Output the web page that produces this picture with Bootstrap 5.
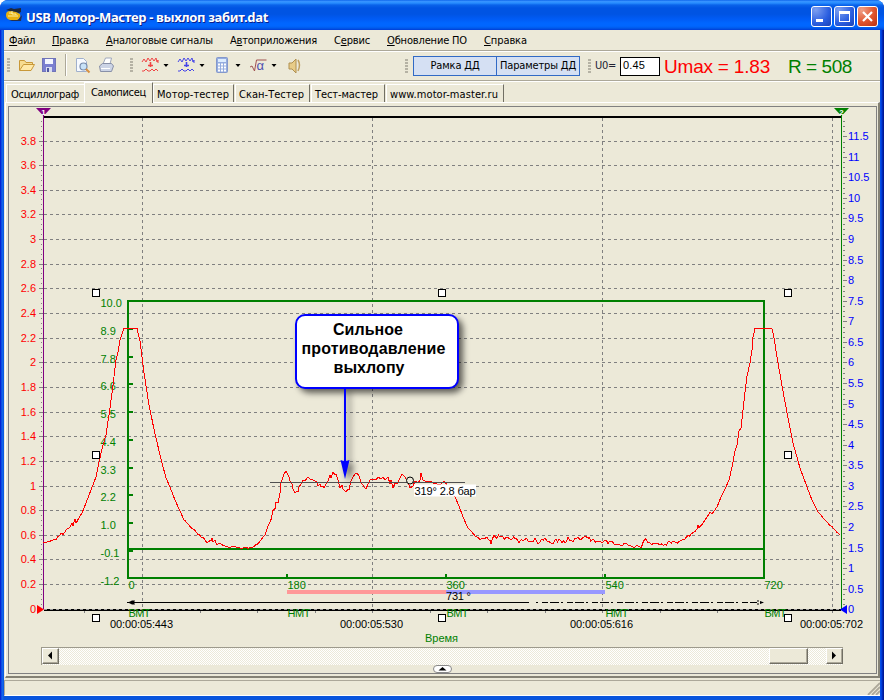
<!DOCTYPE html>
<html lang="ru">
<head>
<meta charset="utf-8">
<title>USB Мотор-Мастер</title>
<link href="https://cdn.jsdelivr.net/npm/bootstrap@5.3.0/dist/css/bootstrap.min.css" rel="stylesheet">
<style>
body{width:884px;height:700px;overflow:hidden;background:#fff;color:#000;font:11px/14px "DejaVu Sans Condensed","DejaVu Sans",sans-serif}
.win{width:884px;height:700px;background:linear-gradient(90deg,#0019cf,#0831d9 1px,#166aee 2px,#0855dd 4px,#0855dd 880px,#0048f1 881px,#001ea0 883px,#00138c);border-radius:8px 8px 0 0;overflow:hidden;padding:0 4px 4px;position:relative}
.titlebar{height:30px;margin:0 -4px;padding:3px 6px 0 6px;background:linear-gradient(#0058e6 0,#3a93ff 1px,#288eff 3px,#0a63ea 5px,#0054e3 8px,#0054e3 14px,#005bf5 19px,#0066ff 23px,#0066ff 26px,#005bec 28px,#003dd7 30px)}
.caption-text{font:bold 13px/20px "Noto Sans",sans-serif;color:#fff;text-shadow:1px 1px #0a1f8c;margin-left:4px}
.wbtn{width:21px;height:21px;border:1px solid #fff;border-radius:3px;background:radial-gradient(circle at 20% 15%,#7d9ff0,#2a5ee0 60%,#1941b5)}
.wbtn.x{background:radial-gradient(circle at 20% 15%,#f0a088,#e0552e 55%,#b83010)}
.face{background:#ece9d8}
.menubar{height:20px;padding-left:5px}
.menubar>div{padding-top:4px;height:20px}
.rule{height:2px;background:#aca899;border-bottom:1px solid #fff}
.tools{height:28px}
.grip{width:3px;height:15px;background:repeating-linear-gradient(#b5b2a4 0 2px,#ece9d8 2px 3px)}
.tgl{height:20px;width:84px;border:1px solid #316ac5;background:#d5e0f3;margin-right:-1px;padding-top:2px}
.u0{width:40px;height:19px;border:1px solid #000;background:#fff;padding:0 2px;font:11px/14px "Liberation Sans",sans-serif}
.big{font:19px/20px "Liberation Sans",sans-serif;padding-top:1px}
.tabstrip{height:20px;padding:0 0 0 2px;position:relative;z-index:2}
.tb{height:18px;border-left:1px solid #fff;border-top:1px solid #fff;border-right:1px solid #716f64;padding:3px 0 0 3px;margin-right:1px}
.tb:first-child{padding-left:4px}
.tb.on{height:21px;margin:-2px 0 -1px -2px;padding:3px 0 0 6px;background:#ece9d8}
.page{height:576px;margin-left:1px;border:1px solid #fff;border-right:2px solid #858274;border-bottom:2px solid #858274;padding:3px 2px 2px 2px}
.frame{border:1px solid #808080;height:568px;width:869px}
.plot{display:block}
.plot text{font-family:"Liberation Sans",sans-serif;font-size:11px}
.sbar{height:18px;width:802px;margin-left:32px;border-top:1px solid #9d9a8c;border-left:1px solid #9d9a8c;background:repeating-conic-gradient(#fff 0 25%,#ece9d8 0 50%) 0 0/2px 2px}
.k{height:16px;width:17px;border:1px solid #fff;border-right-color:#716f64;border-bottom-color:#716f64;box-shadow:inset -1px -1px #aca899}
.thumb{width:39px}
.status{height:16px;border:1px solid #aca899;border-right:0;border-bottom:1px solid #fff;margin-top:2px}
</style>
</head>
<body>
<div class="win d-flex flex-column">
  <div class="titlebar d-flex align-items-start">
    <svg width="16" height="18" class="mt-1"><path d="M0 3l5-2 3 1 7-1v4l-2 1z" fill="#202838"/><path d="M0 8q0-4 4-4l6 1 4 2q1 4-3 6H4Q0 12 0 8z" fill="#e8b010"/><path d="M3 6h3v1h4v1M2 9h10M6 4v3" stroke="#fff0a0" fill="none"/><path d="M3 13h9l4-5-1 6H6z" fill="#253050"/></svg>
    <div class="caption-text mt-1" data-w="242">USB Мотор-Мастер - выхлоп забит.dat</div>
    <div class="d-flex ms-auto" style="gap:2px;padding-top:3px">
      <div class="wbtn"><svg width="19" height="19" class="d-block"><path d="M4 12h7v3H4z" fill="#fff"/></svg></div>
      <div class="wbtn"><svg width="19" height="19" class="d-block"><path d="M4 4h11v11H4zM5 7v7h9V7z" fill="#fff" fill-rule="evenodd"/></svg></div>
      <div class="wbtn x"><svg width="19" height="19" class="d-block"><path d="M5 5l9 9M14 5l-9 9" stroke="#fff" stroke-width="2.2"/></svg></div>
    </div>
  </div>
  <div class="face">
    <div class="menubar d-flex" id="menu"></div>
    <div class="rule"></div>
    <div class="tools d-flex align-items-center">
      <svg width="300" height="28" viewBox="4 52 300 28" shape-rendering="auto">
        <path d="M8.5 58v15M131.500 58v15" stroke="#b5b2a4" stroke-width="3" stroke-dasharray="2 1"/>
        <path d="M65.500 54v22" stroke="#aca899"/><path d="M66.500 54v22" stroke="#fff"/>
        <path d="M19.500 70V60.500h5l1.500 2h6.500v3" fill="#f7dc90" stroke="#c89838"/><path d="M19.500 70.500l4-6h11l-3.500 6z" fill="#ffe9a8" stroke="#c89838"/>
        <rect x="42.500" y="58.500" width="13" height="13" fill="#7b7fd0" stroke="#7074b8"/><rect x="45" y="59" width="8" height="5" fill="#f4f6ff"/><rect x="46" y="67" width="6" height="5" fill="#d8dcf0"/><rect x="47" y="68" width="2" height="4" fill="#5058a0"/>
        <path d="M76.500 58.500h7l3 3v10h-10z" fill="#f7faff" stroke="#a0b0cc"/><circle cx="83.500" cy="66.500" r="3.500" fill="#c8e2f8" stroke="#788cac" stroke-width="1.200"/><path d="M86 69l3.500 3.500" stroke="#d89040" stroke-width="2"/>
        <path d="M103 64l2.500-6h6l-1.500 6" fill="#fff" stroke="#a0a8bc"/><path d="M99.500 66l3-2.500h9l2 2.500-2 5.500h-11z" fill="#ccd4e6" stroke="#8890a8"/><path d="M101 68.500h9" stroke="#fff"/>
        <g fill="none" stroke="#f04444"><path d="M142 62l2-3 2 3 2-4 2 3 2-3 2 3 2-3 1 4 1-2v3"/><path d="M142 71h2l2-2 2 2h2l2-2 2 2 2-2 2 2"/><path d="M150.500 62v5M148 65.500h5" stroke-width="1.600"/></g>
        <g fill="none" stroke="#4444e8"><path d="M178 62l2-3 2 3 2-4 2 3 2-3 2 3 2-3 1 4 1-2v3"/><path d="M178 71h2l2-2 2 2h2l2-2 2 2 2-2 2 2"/><path d="M186.500 62v5M184 65.500h5" stroke-width="1.600"/></g>
        <path d="M163.500 64h5l-2.500 3zM199.500 64h5l-2.500 3zM235.500 64h5l-2.500 3zM271.500 64h5l-2.500 3z"/>
        <rect x="216.500" y="57.500" width="11" height="15" rx="1" fill="#94acdf" stroke="#8498cc"/><rect x="218" y="59" width="8" height="3" fill="#dcecff"/><path d="M218 64.500h8M218 67.500h8M218 70.500h8" stroke="#fff" stroke-width="2" stroke-dasharray="2 1"/>
        <path d="M250 67l2-1 2.500 5 2-11h10" fill="none" stroke="#a05050"/><text x="256.500" y="70" font-family="Liberation Sans,sans-serif" font-size="13" fill="#5050b0">α</text>
        <path d="M289 63h3l4-4v14l-4-4h-3z" fill="#e8cc88" stroke="#b09050"/><path d="M298 60q3 5 0 11" fill="none" stroke="#c0a060" stroke-width="1.500"/>
      </svg>
      <div class="grip" style="margin-left:101px"></div>
      <div class="tgl text-center" style="margin-left:5px"><span data-w="49">Рамка ДД</span></div>
      <div class="tgl text-center"><span data-w="76">Параметры ДД</span></div>
      <div class="grip" style="margin-left:9px"></div>
      <div style="margin-left:4px;width:25px;color:#223"><span data-w="21">U0=</span></div>
      <div class="u0"><span data-w="22">0.45</span></div>
      <div class="big" style="margin-left:4px;width:124px;color:#f00"><span data-w="106">Umax = 1.83</span></div>
      <div class="big" style="color:#008000"><span data-w="64">R = 508</span></div>
    </div>
    <div class="rule"></div>
    <div style="height:2px"></div>
    <div class="tabstrip d-flex" id="tabs"></div>
  </div>
  <div class="face" style="margin-top:-2px">
    <div class="page"><div class="frame">
      <svg class="plot" width="867" height="540" viewBox="9 107 867 540" id="plot"></svg>
      <div class="sbar d-flex">
        <div class="k face"><svg width="14" height="13" class="d-block"><path d="M5 6.500l4-4v8z"/></svg></div>
        <div class="k thumb face" style="margin-left:710px"></div>
        <div class="k face ms-auto"><svg width="14" height="13" class="d-block"><path d="M9 6.500l-4-4v8z"/></svg></div>
      </div>
      <svg width="19" height="8" class="d-block" style="margin-left:424px"><rect x=".5" y=".5" width="18" height="7" rx="3.500" fill="#fff" stroke="#888"/><path d="M5.500 5.500l4-3.500 4 3.500z"/></svg>
    </div></div>
    <div class="status d-flex justify-content-end"><svg width="13" height="14" class="d-block"><path d="M1 14L13 2M5 14l8-8M9 14l4-4" stroke="#aca899" stroke-width="1.800"/></svg></div>
  </div>
</div>
<script src="https://cdn.jsdelivr.net/npm/bootstrap@5.3.0/dist/js/bootstrap.bundle.min.js"></script>
<script>
// Menu: label, slot width, text width
document.getElementById('menu').innerHTML = [
 ['<u>Ф</u>айл',43,26],['<u>П</u>равка',54,37],['<u>А</u>налоговые сигналы',124,107],['А<u>в</u>топриложения',104,87],
 ['С<u>е</u>рвис',53,36],['<u>О</u>бновление ПО',97,80],['<u>С</u>правка',60,43]
].map(m=>`<div style="width:${m[1]}px"><span data-w="${m[2]}">${m[0]}</span></div>`).join('');
document.getElementById('tabs').innerHTML = [
 ['Осциллограф',79,68],['Самописец',69,55,1],['Мотор-тестер',81,72],['Скан-Тестер',75,65],['Тест-мастер',74,63],['www.motor-master.ru',118,108]
].map(m=>`<div class="tb ${m[3]?'on':''}" style="width:${m[1]}px"><span data-w="${m[2]}">${m[0]}</span></div>`).join('');

let s='';
const line=(x1,y1,x2,y2,c,w=1,d='')=>s+=`<line x1="${x1}" y1="${y1}" x2="${x2}" y2="${y2}" stroke="${c}" stroke-width="${w}" stroke-dasharray="${d}" shape-rendering="crispEdges"/>`;
const text=(x,y,t,c,a='start',w=0,e='')=>s+=`<text x="${x}" y="${y}" fill="${c}" text-anchor="${a}" ${w?`textLength="${w}"`:''} ${e}>${t}</text>`;
const G='#008000';
// Grid
for(let i=1;i<=19;i++){const y=Math.floor(609.2-i*24.64)+.5;line(44,y,841,y,'#808080',1,'3 3');}
[142.5,372.5,602.5,832.5].forEach(x=>line(x,118,x,613,'#808080',1,'3 3'));
[84.5,200.5,257.5,315.5,430.5,487.5,545.5,660.5,717.5,775.5].forEach(x=>line(x,610,x,613,'#808080'));
line(44,117,841,117,'#000',2);
line(44,610,841,610,'#000',2);line(44,609.5,841,609.5,'#999',1,'3 3');
// Left scale
for(let i=0;i<=19;i++){const y=Math.floor(609.2-i*24.64)+.5;line(39,y,43,y,'#808080');text(36,y+3.5,+(i*.2).toFixed(1),'#f00','end');
 for(let k=1;k<5;k++)line(41,Math.floor(y-k*4.93)+.5,42,Math.floor(y-k*4.93)+.5,'#808080');}
line(43.5,113,43.5,609,'#800080');
// Right scale
for(let i=0;i<=23;i++){const y=Math.floor(609.8-i*20.57)+.5;line(843,y,847,y,'#808080');text(848,y+3.5,i*.5,'#00f');
 for(let k=1;k<4;k++)line(843,Math.floor(y-k*5.14)+.5,845,Math.floor(y-k*5.14)+.5,'#808080');}
line(841.5,113,841.5,609,G);
s+=`<path d="M36 108h15l-7.500 8z" fill="#800080"/><path d="M834 108h15l-7.500 8z" fill="${G}"/><path d="M37 605l7 4.500-7 4.500z" fill="#f00"/><path d="M847 605l-7 4.500 7 4.500z" fill="#00f"/>`;
text(43.5,114.5,'1','#fff','middle',0,'style="font-size:8px;font-weight:bold"');text(841.5,114.5,'2','#fff','middle',0,'style="font-size:8px;font-weight:bold"');
// Pressure frame
s+=`<path d="M128 301H764V578H128ZM128 549H764" fill="none" stroke="${G}" stroke-width="2" shape-rendering="crispEdges"/>`;
['10.0','8.9','7.8','6.6','5.5','4.4','3.3','2.2','1.0','-0.1','-1.2'].forEach((t,i)=>{const y=Math.round(301+i*27.75);text(100.5,y+5.5,t,G);if(i&&i<10)line(128,y,133,y,G,2);});
[287,446,605].forEach(x=>line(x,574,x,578,G,2));
[[128,'0'],[287,'180'],[446,'360'],[605,'540'],[764,'720']].forEach((p,i)=>{text(p[0]+.5,588.5,p[1],G);text(p[0]+.5,617,i%2?'НМТ':'ВМТ',G,'start',i%2?23:22);});
s+='<path d="M287 590h159v4H287z" fill="#ff9898"/><path d="M446 590h159v4H446z" fill="#9898ff"/>';
line(127,602.5,529,602.5,'#000');line(536,602.5,757,602.5,'#000',1,'2 4 6 2 9 2');
s+='<path d="M128 602.500l4-2h3l-1 2 1 2h-3zM764 602.500l-4-1.500v3zM757 600.500h2v1h-2zM757 603.500h2v1h-2z"/>';
text(446,600,'731 °','#000','start',25);
// Measured curve: sparse vertices, with small sample noise along flat parts
const P=[43,543,47,542,50,541,56,539,58,537,60,535,61,533,63,534,66,530,70,527,72,523,73,526,75,519,76,523,82,513,86,503,91,490,96,477,99,462,103,445,106,435,110,408,113,385,116,360,118,352,120,340,124,328.5,137,328.5,140,341,144,373,149,405,155,434,161,459,166,478,170,487,175,500,180,511,184,520,188,524,193,529,198,534,203,538,207,542,211,540,212,538,213,542,215,541,217,544,221,544,226,546,230,547,235,547,240,548,252,548,256,545,259,543,262,539,265,535,268,526,271,519,273,511,275,509,276,502,278,503,280,493,281,483,282,480,284,474,286,471,288,475,289,477,290,481,292,484,293,489,295,493,297,491,298,492,299,487,302,483,303,480,305,481,308,477,310,479,313,480,315,481,317,482,318,486,320,484,321,487,323,486,324,488,326,484,328,481,330,475,331,478,333,472,335,475,336,474,338,480,340,488,342,485,343,489,346,492,348,489,349,490,351,481,353,477,355,474,357,473,359,476,361,482,364,487,366,489,368,484,370,480,373,479,376,480,378,477,381,479,383,477,385,480,388,477,390,484,391,480,393,488,395,483,397,484,400,478,402,474,405,477,408,482,410,488,413,486,415,481,418,483,420,480,421,473,423,480,427,482,430,481,433,483,437,484,441,484,444,481,447,485,451,489,455,497,459,506,463,517,468,528,475,536,480,539,487,538,490,540,491,542,494,537,497,537,501,535,503,538,507,537,509,539,515,538,519,541,525,539,530,541,535,539,538,542,545,538,547,542,550,541,552,543,556,540,565,542,568,539,573,541,578,538,583,538,588,537,592,541,602,541,608,542,613,543,621,544,630,546,640,547,643,544,645,539,648,543,653,545,660,545,668,543,676,542,683,540,688,537,693,533,697,529,698,525,699,528,705,520,710,513,712,514,717,507,721,497,725,489,729,480,732,467,735,451,737,445,739,431,741,428,743,410,745,392,747,376,750,363,752,350,753,337,755,328.5,772,328.5,774,338,778,363,784,397,789,423,793,443,800,468,807,487,812,500,817,510,822,517,827,522,832,527,840,535];
let pts=P[0]+','+P[1],r=7;
for(let i=2;i<P.length;i+=2){const x0=P[i-2],y0=P[i-1],x1=P[i],y1=P[i+1],n=Math.max(1,Math.round((x1-x0)/1.6));
 for(let k=1;k<=n;k++){r=(r*73+41)%997;const flat=y0!=328.5&&Math.abs(y1-y0)<9&&y0>505;const j=flat?(r/997-.5)*((x0>485&&x0<690)?3.5:1.4):0;pts+=` ${x0+(x1-x0)*k/n},${Math.min(548,y0+(y1-y0)*k/n+j)}`;}}
s+=`<polyline points="${pts}" fill="none" stroke="#f00" shape-rendering="crispEdges"/>`;
line(270,482.5,465,482.5,'#505050');
s+='<circle cx="410" cy="480.500" r="3.500" fill="#ece9d8" stroke="#000"/><path d="M414 484.500h62v12h-62z" fill="#fff"/>';
text(414.5,495,'319° 2.8 бар','#000','start',61);
// Selection handles
[[96,293],[442,293],[788,293],[96,455],[788,455],[96,618],[442,618],[788,618]].forEach(p=>s+=`<rect x="${p[0]-3.5}" y="${p[1]-3.5}" width="7" height="7" fill="#fff" stroke="#000"/>`);
// Callout
s+='<g style="filter:drop-shadow(4px 4px 3px rgba(0,0,0,.6))"><path d="M345 388V462" stroke="#00f" stroke-width="2"/><path d="M340.500 460q4.500 2 9 0l-4.500 19z" fill="#00f"/><rect x="296" y="315" width="162" height="73" rx="9" fill="#fff" stroke="#00f" stroke-width="2"/></g>';
[['Сильное',368,335,70],['противодавление',373.5,354,144],['выхлопу',369,373,71]].forEach(t=>text(t[1],t[2],t[0],'#000','middle',t[3],'style="font-size:16px;font-weight:bold"'));
['443','530','616','702'].forEach((t,i)=>text(110+i*230,628,'00:00:05:'+t,'#000','start',63));
text(425,642,'Время',G,'start',33);
document.getElementById('plot').innerHTML=s;
// Spread each label to its nominal width
document.querySelectorAll('[data-w]').forEach(e=>{e.style.whiteSpace='nowrap';e.style.letterSpacing=(e.dataset.w-e.getBoundingClientRect().width)/e.textContent.length+'px';});
</script>
</body>
</html>
